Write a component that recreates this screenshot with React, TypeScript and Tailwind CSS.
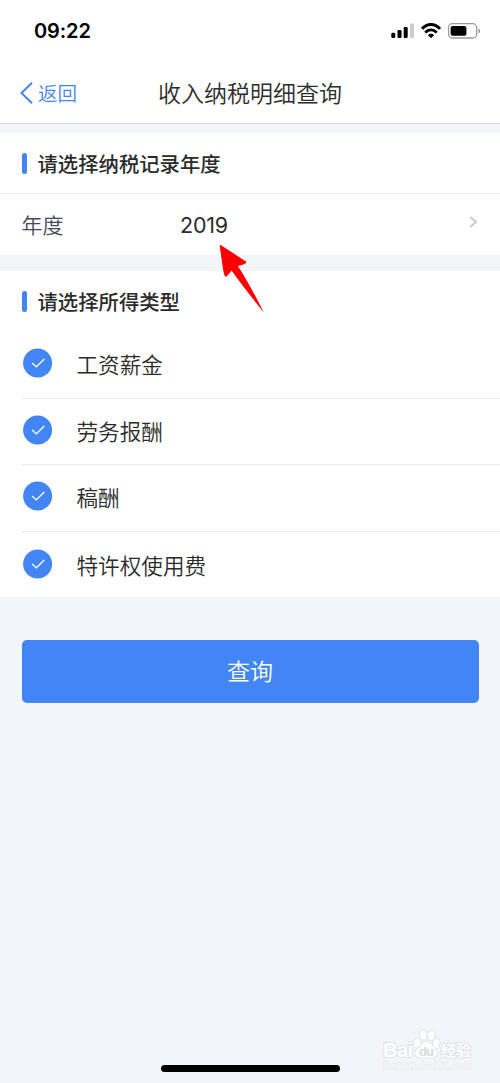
import React from 'react';

const incomeTypes = ['工资薪金', '劳务报酬', '稿酬', '特许权使用费'];

const StatusBar: React.FC = () => (
  <div className="h-[63px] pl-[34px] pr-[19px] flex items-start justify-between text-black">
    <span className="mt-[17px] font-['Inter'] text-[20px] leading-[28px] font-semibold tracking-[-0.1px]">09:22</span>
    <div className="mt-[23px] flex items-start">
      {/* Signal */}
      <svg className="w-[23px] h-[16px]" viewBox="0 0 23 16">
        <rect x="0.3" y="9.8" width="4" height="5.2" rx="1.2" />
        <rect x="6.5" y="7" width="4" height="8" rx="1.2" />
        <rect x="12.7" y="4" width="4" height="11" rx="1.2" />
        <rect x="19" y="0.5" width="4" height="14.5" rx="1.2" fill="#cccccc" />
      </svg>
      {/* Wifi */}
      <svg className="w-[20px] h-[16px] ml-[7px]" viewBox="0 0 20 16" fill="none" stroke="#000" strokeWidth="2.9">
        <path d="M1 5.8C6 0 14 0 19 5.8" />
        <path d="M4.3 9.6C7.5 6 12.5 6 15.7 9.6" />
        <path d="M6.9 12.2C8.7 10.3 11.3 10.3 13.1 12.2L10 15.2Z" fill="#000" stroke="none" />
      </svg>
      {/* Battery */}
      <svg className="w-[34px] h-[16px] ml-[7px] -mr-px" viewBox="0 0 34 16">
        <rect x="0.5" y="0.7" width="28.2" height="14.3" rx="4" fill="none" stroke="#9a9a9a" strokeWidth="1.3" />
        <rect x="2.6" y="2.9" width="15.8" height="9.9" rx="2" />
        <path d="M30.5 5.4C32.5 6.2 32.5 9.5 30.5 10.3Z" fill="#8a8a8a" />
      </svg>
    </div>
  </div>
);

const SectionTitle: React.FC<{ children: React.ReactNode }> = ({ children }) => (
  <div className="h-[61px] pl-[21.5px] flex items-center">
    <span className="w-[5px] h-[21px] rounded-full bg-[#4285f4]" />
    <h2 className="ml-[11px] mb-px text-[20.35px] leading-[30px] font-medium text-[#2b2b2b]">{children}</h2>
  </div>
);

const CheckMark: React.FC = () => (
  <svg className="w-[30px] h-[30px] shrink-0" viewBox="0 0 30 30">
    <circle cx="14.6" cy="15.1" r="14.5" fill="#4285f4" />
    <path d="M9.2 15L13.3 18.9L21.3 11" fill="none" stroke="#fff" strokeWidth="1.4" />
  </svg>
);

const Watermark: React.FC = () => (
  <svg className="absolute left-[378px] top-[1024px] w-[112px] h-[52px]" viewBox="0 0 112 52">
    <g fill="#fdfefe" stroke="#dfe3e6" strokeWidth="1.8" paintOrder="stroke" fontFamily="Liberation Sans, Noto Sans CJK SC, sans-serif">
      <text x="5" y="32.5" fontSize="20" fontWeight="700" textLength="30">Bai</text>
      <ellipse cx="39.3" cy="19.3" rx="3.3" ry="4.5" transform="rotate(-15 39.3 19.3)" />
      <ellipse cx="45.3" cy="10.9" rx="3.5" ry="4.7" />
      <ellipse cx="53.4" cy="11.4" rx="3.5" ry="4.7" />
      <ellipse cx="58.3" cy="19.6" rx="3.3" ry="4.5" transform="rotate(15 58.3 19.6)" />
      <path d="M48.5 17.5C53 17.5 53.5 22 57.5 25C61 28 59.5 33.7 54.5 33.7H42.5C36.5 33.7 35.5 28 39 25C43.5 21.5 44 17.5 48.5 17.5Z" />
      <text x="63" y="31.5" fontSize="15" fontWeight="700" textLength="30">经验</text>
      <text x="5" y="45" fontSize="10" strokeWidth="0.8" textLength="89">jingyan.baidu.com</text>
    </g>
    <text x="41" y="31.5" fontFamily="Liberation Sans, sans-serif" fontSize="13" fontWeight="700" fill="#d6dbdf" textLength="15">du</text>
  </svg>
);

export default function App() {
  return (
    <div className="relative w-[500px] h-[1083px] overflow-hidden bg-[#f3f6f9] font-['Noto_Sans_CJK_SC',sans-serif] text-[#2b2b2b]">
      <header className="h-[124px] bg-white border-b border-[#d9dde2]">
        <StatusBar />
        <nav className="h-[60px] grid grid-cols-[140px_1fr_140px] items-center">
          <button className="pl-[20px] flex items-center text-[#4285f4]">
            <svg className="w-[13px] h-[22px]" viewBox="0 0 13 22" fill="none" stroke="currentColor" strokeWidth="2">
              <path d="M12 0.8L1.5 11L12 21.2" />
            </svg>
            <span className="ml-[5px] text-[19.5px] leading-[28px] font-[350]">返回</span>
          </button>
          <h1 className="mb-[2px] text-center text-[23px] leading-[32px] font-[350] whitespace-nowrap">收入纳税明细查询</h1>
        </nav>
      </header>

      <section className="mt-[9px] bg-white">
        <SectionTitle>请选择纳税记录年度</SectionTitle>
        <div className="-mt-px h-[62px] border-t border-[#e9ebee] pl-[21.5px] pr-[22px] flex items-center">
          <span className="w-[158.5px] mb-[2px] text-[21px] leading-[30px] font-[350] text-[#44485a]">年度</span>
          <span className="font-['Inter'] text-[21.5px] leading-[30px] tracking-[-0.2px]">2019</span>
          <svg className="ml-auto mb-[6px] w-[9px] h-[12px]" viewBox="0 0 9 12" fill="none" stroke="#c9cacf" strokeWidth="2">
            <path d="M1.2 1L7 6L1.2 11" />
          </svg>
        </div>
      </section>

      <section className="mt-[16px] h-[326px] bg-white">
        <SectionTitle>请选择所得类型</SectionTitle>
        <ul className="pl-[21.5px]">
          {incomeTypes.map((name) => (
            <li key={name} className="h-[66.6px] pl-[1.5px] pb-[3px] flex items-center border-b border-[#e9ebee] last:border-b-0">
              <CheckMark />
              <span className="ml-[23.5px] mt-[2px] text-[21.6px] leading-[32px] font-[350]">{name}</span>
            </li>
          ))}
        </ul>
      </section>

      <button className="mt-[43px] ml-[21.5px] w-[457px] h-[62.5px] pb-[2px] flex items-center justify-center rounded-[5px] bg-[#4285f4] text-[23px] font-[350] text-white">
        查询
      </button>

      {/* Pointer to the year value */}
      <svg className="absolute left-[215px] top-[241px] w-[54px] h-[74px]" viewBox="0 0 54 74">
        <path d="M4.6 4Q5.5 3.6 6.5 4.5L31 20.5Q33 23 23 25Q35 44 48.8 71.5Q32 51 16.5 29.5Q12 36 10.3 35.8Q9 34 8 28Z" fill="#ff0000" stroke="#fff" strokeWidth="2" paintOrder="stroke" strokeLinejoin="round" />
      </svg>

      <Watermark />

      {/* Home indicator */}
      <div className="absolute left-[161px] top-[1065px] w-[178.5px] h-[7px] rounded-full bg-black" />
    </div>
  );
}
